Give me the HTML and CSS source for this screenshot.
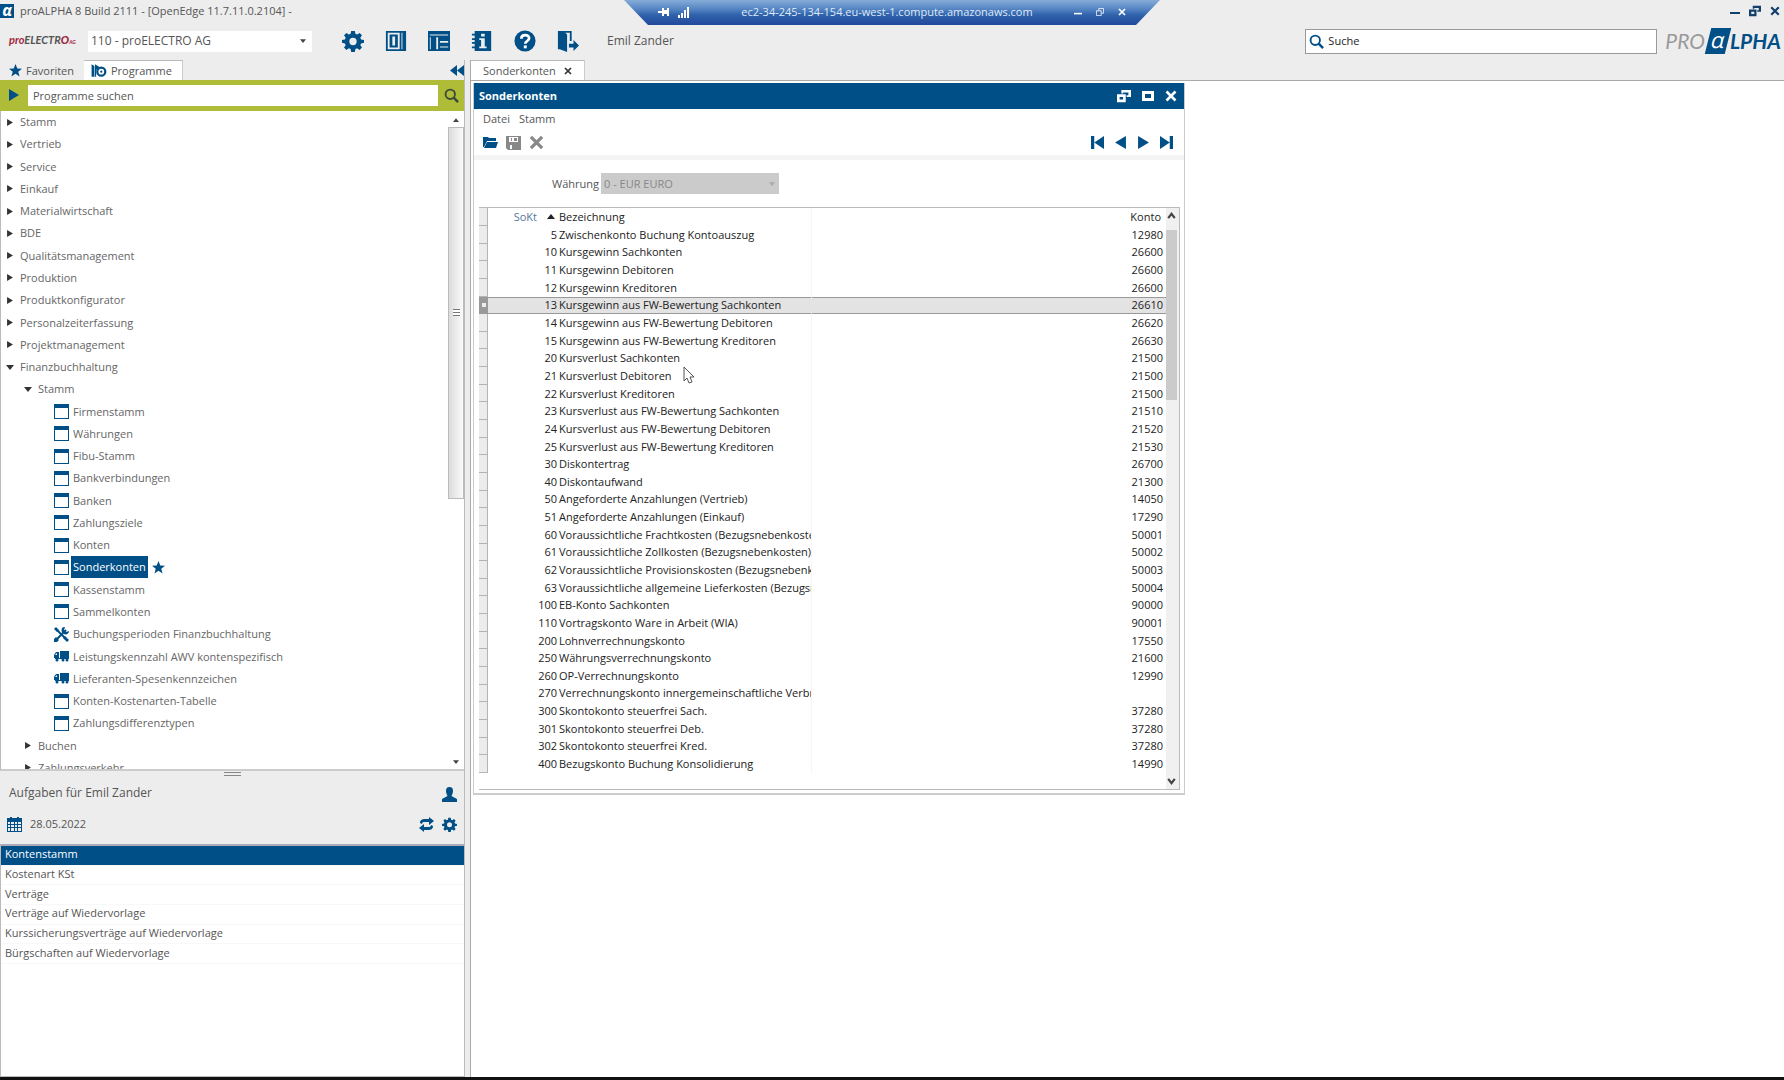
FILE: index.html
```html
<!DOCTYPE html>
<html lang="de">
<head>
<meta charset="utf-8">
<title>proALPHA – Sonderkonten</title>
<link rel="stylesheet" href="styles.css">
</head>
<body>
<svg class="sprite" aria-hidden="true">
  <symbol id="gear" viewBox="0 0 24 24"><path fill-rule="evenodd" d="M10 1h4l.6 3.2 1.9.8L19.200 3.200l2.600 2.600-1.800 2.700.8 1.900L24 11v3l-3.200.6-.8 1.900 1.800 2.700-2.600 2.600-2.700-1.800-1.900.8L14 24h-4l-.6-3.200-1.900-.8-2.700 1.800-2.600-2.600L4 16.500l-.8-1.900L0 14v-3l3.200-.6.8-1.900-1.800-2.700 2.600-2.600L7.500 5l1.900-.8zM12 8.500a4 4 0 1 0 0 8 4 4 0 0 0 0-8z"/></symbol>
  <symbol id="panel" viewBox="0 0 24 24"><path fill-rule="evenodd" d="M1 1h22v22H1zM3 3v18h13V3zM18 3v18h1V3z"/><path fill-rule="evenodd" d="M5 5h9v14H5zM8 7v10h3V7z"/></symbol>
  <symbol id="layout" viewBox="0 0 24 24"><path fill-rule="evenodd" d="M0 1h24v22H0zM2 5v1h20V5zM2 8v13h1V8zM9 8v13h2V8zM13 12v2h9v-2zM13 18v1h9v-1z"/></symbol>
  <symbol id="info" viewBox="0 0 24 24"><path fill-rule="evenodd" d="M4 1h18v22H4v-3H1v-2h3v-3H1v-2h3v-2H1V9h3V6H1V4h3zM11 4v3h4V4zM9 9v2h2v7H9v2h8v-2h-2V9z"/></symbol>
  <symbol id="help" viewBox="0 0 24 24"><circle cx="12" cy="12" r="11.500"/><path d="M8 9.500C8 4.500 16.500 4.500 16.500 9c0 3-4.200 3-4.200 6" fill="none" stroke="#fff" stroke-width="3"/><path d="M10.700 16.800h3.200V20h-3.200z" fill="#fff"/></symbol>
  <symbol id="exit" viewBox="0 0 24 24"><path d="M1 1h15v11h-2V3H9l2 2v19l-8-3H1zM13 15h5v-4l6 6-6 6v-4h-5z"/></symbol>
  <symbol id="star" viewBox="0 0 24 24"><path d="M12 0l3.300 8.500 8.700.3-6.900 5.500L19.500 23 12 18l-7.500 5 2.400-8.700L0 8.800l8.700-.3z"/></symbol>
  <symbol id="prog" viewBox="0 0 28 24"><path d="M1 1l5 3v19H1zM7 1l8 5-6 5v12H7z"/><circle cx="18" cy="14" r="7" fill="none" stroke="currentColor" stroke-width="4"/><circle cx="18" cy="14" r="2"/></symbol>
  <symbol id="lens" viewBox="0 0 24 24"><g fill="none" stroke="currentColor"><circle cx="10" cy="10" r="7.500" stroke-width="3"/><path d="M15.500 15.500l7 7" stroke-width="4"/></g></symbol>
  <symbol id="win" viewBox="0 0 15 15"><path fill-rule="evenodd" d="M0 0h15v15H0zM1 4v10h13V4z"/></symbol>
  <symbol id="tools" viewBox="0 0 15 15"><path d="M3 3l9 9M12 3L3 12" stroke="currentColor" stroke-width="2"/><path d="M0 2l2-2 3 3-2 2zM10 0l1 0-1 3 2 2 3-1c0 3-3 4-5 3L8 5c-1-2 0-5 2-5zM9 11l2-2 4 4-2 2zM0 12l2-2 3 3-2 2H0z"/></symbol>
  <symbol id="truck" viewBox="0 0 15 13"><path fill-rule="evenodd" d="M6 1h9v7H6zM0 5l2-3h3v6H0zM1 5h2V3z"/><path d="M1 8h14v1H1z"/><circle cx="3" cy="10" r="1.500"/><circle cx="9" cy="10" r="1.500"/><circle cx="13" cy="10" r="1.500"/></symbol>
  <symbol id="restore" viewBox="0 0 16 14"><path fill-rule="evenodd" d="M5 0h11v8h-5V6h2V3H7v1H5zM0 5h10v9H0zM3 8v3h4V8z"/></symbol>
  <symbol id="cross" viewBox="0 0 12 12"><path d="M1.500 1.500l9 9M10.500 1.500l-9 9" stroke="currentColor" stroke-width="2.600"/></symbol>
  <symbol id="dash" viewBox="0 0 10 10"><path d="M0 6h10v2H0z"/></symbol>
  <symbol id="right" viewBox="0 0 10 12"><path d="M0 0l10 6-10 6z"/></symbol>
  <symbol id="left" viewBox="0 0 10 12"><path d="M10 0L0 6l10 6z"/></symbol>
  <symbol id="first" viewBox="0 0 12 12"><path d="M0 0h3v12H0zM12 0v12L3 6z"/></symbol>
  <symbol id="last" viewBox="0 0 12 12"><path d="M9 0h3v12H9zM0 0l9 6-9 6z"/></symbol>
  <symbol id="down" viewBox="0 0 8 5"><path d="M0 0h8L4 5z"/></symbol>
  <symbol id="up" viewBox="0 0 8 5"><path d="M0 5h8L4 0z"/></symbol>
</svg>

<header>
  <div class="titlebar">
    <span class="appmark">α</span>
    <span class="apptitle">proALPHA 8 Build 2111 - [OpenEdge 11.7.11.0.2104] -</span>
    <div class="winctl">
      <button aria-label="Minimieren"><svg class="i10"><use href="#dash"/></svg></button>
      <button aria-label="Wiederherstellen"><svg class="i12"><use href="#restore"/></svg></button>
      <button aria-label="Schließen"><svg class="i10"><use href="#cross"/></svg></button>
    </div>
  </div>
  <div class="toolbar">
    <span class="company">pro<i>ELECTR<b>O</b></i><small>AG</small></span>
    <label class="pick"><select aria-label="Firma"><option>110 - proELECTRO AG</option></select><svg class="caret"><use href="#down"/></svg></label>
    <nav class="tools">
      <button aria-label="Einstellungen"><svg class="i22"><use href="#gear"/></svg></button>
      <button aria-label="Seitenleiste"><svg class="i22"><use href="#panel"/></svg></button>
      <button aria-label="Layout"><svg class="i22"><use href="#layout"/></svg></button>
      <button aria-label="Information"><svg class="i22"><use href="#info"/></svg></button>
      <button aria-label="Hilfe"><svg class="i22"><use href="#help"/></svg></button>
      <button aria-label="Abmelden"><svg class="i22"><use href="#exit"/></svg></button>
    </nav>
    <span class="user">Emil Zander</span>
    <label class="search"><svg class="i15"><use href="#lens"/></svg><input type="text" placeholder="Suche" aria-label="Suche"></label>
    <span class="brand"><span class="pro">PRO</span><span class="alpha">α</span><span class="lpha">LPHA</span></span>
  </div>
</header>

<div class="rdp">
  <svg class="rdpbg" viewBox="0 0 536 25" preserveAspectRatio="none">
    <defs><linearGradient id="rg" x1="0" y1="0" x2="0" y2="1"><stop offset="0" stop-color="#86acd8"/><stop offset=".4" stop-color="#4f80c0"/><stop offset=".6" stop-color="#2f62ab"/><stop offset="1" stop-color="#21489c"/></linearGradient></defs>
    <path d="M0 0h536l-24 25H24z" fill="url(#rg)"/>
  </svg>
  <div class="rdprow">
    <svg class="i12" viewBox="0 0 12 12"><path d="M0 5h4V2h2v2h3V2h2v8H9V8H6v2H4V7H0z"/></svg>
    <svg class="i12" viewBox="0 0 12 12"><path d="M0 9h2v3H0zM3 7h2v5H3zM6 4h2v8H6zM9 1h2v11H9z"/></svg>
    <span class="host">ec2-34-245-134-154.eu-west-1.compute.amazonaws.com</span>
    <button aria-label="Minimieren"><svg class="i8"><use href="#dash"/></svg></button>
    <button aria-label="Wiederherstellen"><svg class="i8" viewBox="0 0 10 10"><path fill="none" stroke="currentColor" d="M3.500 3V.5h6v6H7M.5 3.500h6v6h-6z"/></svg></button>
    <button aria-label="Schließen"><svg class="i8"><use href="#cross"/></svg></button>
  </div>
</div>

<div class="body">
<aside>
  <div class="tabs">
    <button class="tab"><svg class="i13"><use href="#star"/></svg>Favoriten</button>
    <button class="tab on"><svg class="i15"><use href="#prog"/></svg>Programme</button>
    <button class="collapse" aria-label="Einklappen"><svg viewBox="0 0 14 11"><path d="M7 0v11L0 5.500zM14 0v11L7 5.500z"/></svg></button>
  </div>
  <div class="finder">
    <button aria-label="Starten"><svg class="i12"><use href="#right"/></svg></button>
    <input type="text" placeholder="Programme suchen" aria-label="Programme suchen">
    <button class="go" aria-label="Suchen"><svg class="i15"><use href="#lens"/></svg></button>
  </div>
  <div class="treebox">
    <ul class="tree">
      <li><svg class="ar"><use href="#right"/></svg><a href="#">Stamm</a></li>
      <li><svg class="ar"><use href="#right"/></svg><a href="#">Vertrieb</a></li>
      <li><svg class="ar"><use href="#right"/></svg><a href="#">Service</a></li>
      <li><svg class="ar"><use href="#right"/></svg><a href="#">Einkauf</a></li>
      <li><svg class="ar"><use href="#right"/></svg><a href="#">Materialwirtschaft</a></li>
      <li><svg class="ar"><use href="#right"/></svg><a href="#">BDE</a></li>
      <li><svg class="ar"><use href="#right"/></svg><a href="#">Qualitätsmanagement</a></li>
      <li><svg class="ar"><use href="#right"/></svg><a href="#">Produktion</a></li>
      <li><svg class="ar"><use href="#right"/></svg><a href="#">Produktkonfigurator</a></li>
      <li><svg class="ar"><use href="#right"/></svg><a href="#">Personalzeiterfassung</a></li>
      <li><svg class="ar"><use href="#right"/></svg><a href="#">Projektmanagement</a></li>
      <li><svg class="ar open"><use href="#down"/></svg><a href="#">Finanzbuchhaltung</a></li>
      <li class="l1"><svg class="ar open"><use href="#down"/></svg><a href="#">Stamm</a></li>
      <li class="l2"><svg class="i15"><use href="#win"/></svg><a href="#">Firmenstamm</a></li>
      <li class="l2"><svg class="i15"><use href="#win"/></svg><a href="#">Währungen</a></li>
      <li class="l2"><svg class="i15"><use href="#win"/></svg><a href="#">Fibu-Stamm</a></li>
      <li class="l2"><svg class="i15"><use href="#win"/></svg><a href="#">Bankverbindungen</a></li>
      <li class="l2"><svg class="i15"><use href="#win"/></svg><a href="#">Banken</a></li>
      <li class="l2"><svg class="i15"><use href="#win"/></svg><a href="#">Zahlungsziele</a></li>
      <li class="l2"><svg class="i15"><use href="#win"/></svg><a href="#">Konten</a></li>
      <li class="l2 sel"><svg class="i15"><use href="#win"/></svg><a href="#">Sonderkonten</a><svg class="i13"><use href="#star"/></svg></li>
      <li class="l2"><svg class="i15"><use href="#win"/></svg><a href="#">Kassenstamm</a></li>
      <li class="l2"><svg class="i15"><use href="#win"/></svg><a href="#">Sammelkonten</a></li>
      <li class="l2"><svg class="i15"><use href="#tools"/></svg><a href="#">Buchungsperioden Finanzbuchhaltung</a></li>
      <li class="l2"><svg class="i15"><use href="#truck"/></svg><a href="#">Leistungskennzahl AWV kontenspezifisch</a></li>
      <li class="l2"><svg class="i15"><use href="#truck"/></svg><a href="#">Lieferanten-Spesenkennzeichen</a></li>
      <li class="l2"><svg class="i15"><use href="#win"/></svg><a href="#">Konten-Kostenarten-Tabelle</a></li>
      <li class="l2"><svg class="i15"><use href="#win"/></svg><a href="#">Zahlungsdifferenztypen</a></li>
      <li class="l1"><svg class="ar"><use href="#right"/></svg><a href="#">Buchen</a></li>
      <li class="l1"><svg class="ar"><use href="#right"/></svg><a href="#">Zahlungsverkehr</a></li>
    </ul>
    <div class="sbar"><svg class="sa"><use href="#up"/></svg><div class="thumb"><i></i></div><div class="rest"></div><svg class="sa"><use href="#down"/></svg></div>
  </div>
  <section class="tasks">
    <div class="grip"></div>
    <div class="taskhead"><h2>Aufgaben für Emil Zander</h2><button aria-label="Benutzer"><svg class="i15" viewBox="0 0 15 15"><path d="M7.500 0C10 0 11 1.500 11 4S9.800 8 9.500 9l5.500 3v3H0v-3l5.500-3C5.200 8 4 6.500 4 4s1-4 3.500-4z"/></svg></button></div>
    <div class="taskdate">
      <svg class="i15" viewBox="0 0 15 15"><path fill-rule="evenodd" d="M0 1h3V0h2v1h5V0h2v1h3v14H0zM1 5v2h2V5zM4 5v2h3V5zM8 5v2h2V5zM11 5v2h3V5zM1 8v2h2V8zM4 8v2h3V8zM8 8v2h2V8zM11 8v2h3V8zM1 11v3h2v-3zM4 11v3h3v-3zM8 11v3h2v-3zM11 11v3h3v-3z"/></svg>
      <span>28.05.2022</span>
      <button aria-label="Aktualisieren"><svg class="i15" viewBox="0 0 15 15"><path d="M1 6c0-3 2-4 5-4h4V0l5 4-5 4V5H6C4 5 3.500 5 3 7zM14 9c0 3-2 4-5 4H5v2l-5-4 5-4v3h4c2 0 2.500 0 3-2z"/></svg></button>
      <button aria-label="Einstellungen"><svg class="i15"><use href="#gear"/></svg></button>
    </div>
    <ul class="tasklist">
      <li class="on">Kontenstamm</li><li>Kostenart KSt</li><li>Verträge</li><li>Verträge auf Wiedervorlage</li><li>Kurssicherungsverträge auf Wiedervorlage</li><li>Bürgschaften auf Wiedervorlage</li>
    </ul>
  </section>
</aside>

<main>
  <div class="tabs mtabs"><button class="tab on">Sonderkonten<svg class="i8"><use href="#cross"/></svg></button></div>
  <div class="desk">
    <section class="window">
      <div class="wtitle"><h1>Sonderkonten</h1>
        <button aria-label="Wiederherstellen"><svg class="i14"><use href="#restore"/></svg></button>
        <button aria-label="Maximieren"><svg class="i12" viewBox="0 0 12 12"><path fill-rule="evenodd" d="M0 1h12v10H0zM3 4v4h6V4z"/></svg></button>
        <button aria-label="Schließen"><svg class="i12"><use href="#cross"/></svg></button>
      </div>
      <div class="menu"><button>Datei</button><button>Stamm</button></div>
      <div class="wtools">
        <button aria-label="Öffnen"><svg class="i15 blue" viewBox="0 0 15 15"><path d="M0 2h5l1 1h7v3H4l-3 6H0zM4 7h11l-2 6H1z"/></svg></button>
        <button aria-label="Speichern"><svg class="i15 grey" viewBox="0 0 15 15"><path fill-rule="evenodd" d="M0 1h15v14H2l-2-2zM3 2v5h9V2zM4 10v4h2v-4zM5 3h1v3H5zM8 3h3v3H8z"/></svg></button>
        <button aria-label="Löschen"><svg class="i15 grey"><use href="#cross"/></svg></button>
        <span class="nav">
          <button aria-label="Erster"><svg class="i13 blue"><use href="#first"/></svg></button>
          <button aria-label="Voriger"><svg class="i13 blue"><use href="#left"/></svg></button>
          <button aria-label="Nächster"><svg class="i13 blue"><use href="#right"/></svg></button>
          <button aria-label="Letzter"><svg class="i13 blue"><use href="#last"/></svg></button>
        </span>
      </div>
      <div class="form"><label for="cur">Währung</label><span class="cur"><select id="cur" disabled><option>0 - EUR EURO</option></select><svg class="caret"><use href="#down"/></svg></span></div>
      <div class="grid">
        <table>
          <colgroup><col class="c0"><col class="c1"><col class="c2"><col></colgroup>
          <thead><tr><th></th><th class="so"><span>SoKt</span><svg><use href="#up"/></svg></th><th>Bezeichnung</th><th class="n">Konto</th></tr></thead>
          <tbody>
          <tr><td></td><td>5</td><td>Zwischenkonto Buchung Kontoauszug</td><td>12980</td></tr>
          <tr><td></td><td>10</td><td>Kursgewinn Sachkonten</td><td>26600</td></tr>
          <tr><td></td><td>11</td><td>Kursgewinn Debitoren</td><td>26600</td></tr>
          <tr><td></td><td>12</td><td>Kursgewinn Kreditoren</td><td>26600</td></tr>
          <tr class="cur-row"><td><i></i></td><td>13</td><td>Kursgewinn aus FW-Bewertung Sachkonten</td><td>26610</td></tr>
          <tr><td></td><td>14</td><td>Kursgewinn aus FW-Bewertung Debitoren</td><td>26620</td></tr>
          <tr><td></td><td>15</td><td>Kursgewinn aus FW-Bewertung Kreditoren</td><td>26630</td></tr>
          <tr><td></td><td>20</td><td>Kursverlust Sachkonten</td><td>21500</td></tr>
          <tr><td></td><td>21</td><td>Kursverlust Debitoren</td><td>21500</td></tr>
          <tr><td></td><td>22</td><td>Kursverlust Kreditoren</td><td>21500</td></tr>
          <tr><td></td><td>23</td><td>Kursverlust aus FW-Bewertung Sachkonten</td><td>21510</td></tr>
          <tr><td></td><td>24</td><td>Kursverlust aus FW-Bewertung Debitoren</td><td>21520</td></tr>
          <tr><td></td><td>25</td><td>Kursverlust aus FW-Bewertung Kreditoren</td><td>21530</td></tr>
          <tr><td></td><td>30</td><td>Diskontertrag</td><td>26700</td></tr>
          <tr><td></td><td>40</td><td>Diskontaufwand</td><td>21300</td></tr>
          <tr><td></td><td>50</td><td>Angeforderte Anzahlungen (Vertrieb)</td><td>14050</td></tr>
          <tr><td></td><td>51</td><td>Angeforderte Anzahlungen (Einkauf)</td><td>17290</td></tr>
          <tr><td></td><td>60</td><td>Voraussichtliche Frachtkosten (Bezugsnebenkosten)</td><td>50001</td></tr>
          <tr><td></td><td>61</td><td>Voraussichtliche Zollkosten (Bezugsnebenkosten)</td><td>50002</td></tr>
          <tr><td></td><td>62</td><td>Voraussichtliche Provisionskosten (Bezugsnebenkosten)</td><td>50003</td></tr>
          <tr><td></td><td>63</td><td>Voraussichtliche allgemeine Lieferkosten (Bezugsnebenkosten)</td><td>50004</td></tr>
          <tr><td></td><td>100</td><td>EB-Konto Sachkonten</td><td>90000</td></tr>
          <tr><td></td><td>110</td><td>Vortragskonto Ware in Arbeit (WIA)</td><td>90001</td></tr>
          <tr><td></td><td>200</td><td>Lohnverrechnungskonto</td><td>17550</td></tr>
          <tr><td></td><td>250</td><td>Währungsverrechnungskonto</td><td>21600</td></tr>
          <tr><td></td><td>260</td><td>OP-Verrechnungskonto</td><td>12990</td></tr>
          <tr><td></td><td>270</td><td>Verrechnungskonto innergemeinschaftliche Verbringung</td><td></td></tr>
          <tr><td></td><td>300</td><td>Skontokonto steuerfrei Sach.</td><td>37280</td></tr>
          <tr><td></td><td>301</td><td>Skontokonto steuerfrei Deb.</td><td>37280</td></tr>
          <tr><td></td><td>302</td><td>Skontokonto steuerfrei Kred.</td><td>37280</td></tr>
          <tr><td></td><td>400</td><td>Bezugskonto Buchung Konsolidierung</td><td>14990</td></tr>
          </tbody>
        </table>
        <div class="gbar">
          <svg viewBox="0 0 10 10"><path d="M2 7l3-4 3 4"/></svg><div class="gthumb"></div><svg viewBox="0 0 10 10"><path d="M2 3l3 4 3-4"/></svg>
        </div>
      </div>
    </section>
    <svg class="pointer" viewBox="0 0 12 18"><path d="M1 1v14l3-3 2 5 3-1-2-5h4z" fill="#fff" stroke="#555"/></svg>
  </div>
</main>
</div>
</body>
</html>
```
FILE: styles.css
```css
* { box-sizing: border-box; }
html, body { margin: 0; }
body {
  --blue: #004f87;
  --grey: #ededed;
  height: 100vh;
  display: flex;
  flex-direction: column;
  background: var(--grey);
  border-bottom: 3px solid #111;
  color: #555;
  font: 11px/14px "Open Sans", "Noto Sans", sans-serif;
  position: relative;
  overflow: hidden;
}
.sprite { position: absolute; width: 0; height: 0; }
svg { fill: currentColor; flex: none; display: block; }
button { border: 0; padding: 0; margin: 0; background: none; font: inherit; color: inherit; display: flex; align-items: center; }
input, select { font: inherit; color: inherit; border: 0; margin: 0; border-radius: 0; }
ul { list-style: none; margin: 0; padding: 0; }
h1, h2 { margin: 0; font: inherit; }
a { color: inherit; text-decoration: none; }
.i8 { width: 8px; height: 8px; }
.i10 { width: 10px; height: 10px; }
.i12 { width: 12px; height: 12px; }
.i13 { width: 13px; height: 13px; }
.i14 { width: 14px; height: 14px; }
.i15 { width: 15px; height: 15px; }
.i22 { width: 22px; height: 22px; }
.blue { color: var(--blue); }
.grey { color: #888; }
.caret { width: 6px; height: 4px; color: #444; }

.titlebar { display: flex; align-items: center; height: 22px; padding-right: 4px; }
.appmark { width: 14px; height: 14px; background: var(--blue); color: #fff; font: italic bold 16px/12px "Open Sans", sans-serif; text-align: center; }
.apptitle { padding-left: 6px; flex: 1; }
.winctl { display: flex; gap: 9px; color: #123f6b; }

.toolbar { display: flex; align-items: center; height: 38px; padding: 0 3px 0 9px; font-size: 12px; }
.company { width: 79px; color: #a2253c; font: italic bold 11px/14px Lato, sans-serif; white-space: nowrap; }
.company i { color: #555; }
.company b { color: #a2253c; }
.company small { font-size: 5px; }
.pick { display: flex; align-items: center; width: 224px; height: 21px; background: #fff; padding-right: 6px; }
.pick select { appearance: none; flex: 1; background: none; padding: 0 3px; }
.tools { display: flex; gap: 21px; margin-left: 30px; color: var(--blue); }
.user { margin-left: 28px; flex: 1; }
.search { display: flex; align-items: center; gap: 4px; width: 352px; height: 25px; padding-left: 3px; background: #fff; border: 1px solid #999; color: var(--blue); font-size: 11px; }
.search input { flex: 1; color: #222; outline: 0; padding: 0; }
.search input::placeholder { color: #222; }
.brand { display: flex; align-items: center; margin-left: 8px; font: italic 21px/22px Lato, sans-serif; color: #999; }
.alpha { width: 20px; height: 26px; margin: 0 2px 0 3px; background: var(--blue); color: #fff; transform: skewX(-14deg); text-align: center; font: 22px/22px "Open Sans", sans-serif; }
.lpha { color: var(--blue); font-weight: bold; }

.rdp { position: absolute; top: 0; left: 50%; width: 536px; height: 25px; transform: translateX(-50%); color: #fff; }
.rdpbg { position: absolute; inset: 0; width: 100%; height: 100%; }
.rdprow { position: relative; display: flex; align-items: center; height: 23px; padding: 0 34px; gap: 8px; }
.rdprow .host { flex: 1; padding-left: 16px; text-align: center; color: #dfe9f7; }
.rdprow button { margin-left: 6px; }

.body { flex: 1; display: flex; min-height: 0; }
aside { width: 471px; display: flex; flex-direction: column; border-right: 1px solid #aaa; padding-right: 6px; background: linear-gradient(90deg, transparent 464px, #bbb 464px, #bbb 465px, #ececec 465px); }
.tabs { display: flex; height: 20px; flex: none; }
.tab { gap: 4px; padding: 0 9px; border-top: 1px solid transparent; }
.tab.on { background: #fff; border-top-color: #bbb; border-right: 1px solid #ccc; padding: 0 10px 0 7px; }
.tab:not(.on) { width: 84px; }
.tab svg { color: var(--blue); }
.tab .i15 { width: 16px; }
.collapse { margin-left: auto; color: var(--blue); }
.collapse svg { width: 14px; height: 11px; }
.finder { display: flex; align-items: center; height: 31px; flex: none; background: #aebc37; color: var(--blue); padding: 0 5px 1px 8px; gap: 8px; }
.finder input { flex: 1; height: 21px; color: #555; padding: 0 5px; background: #fff; outline: 0; }
.finder input::placeholder { color: #555; }
.finder .go { color: #3c4a3a; margin-left: -2px; }

.treebox { flex: 1; min-height: 0; display: flex; background: #fff; overflow: hidden; border-left: 1px solid #bbb; border-bottom: 2px solid #ccc; }
.tree { flex: 1; display: grid; grid-auto-rows: 1fr; height: 668px; color: #666; }
.tree li { display: flex; align-items: center; padding-left: 6px; }
.ar { width: 6px; height: 7px; margin-right: 7px; color: #333; }
.tree .l1 { padding-left: 24px; }
.tree .ar.open { width: 8px; height: 5px; margin: 0 6px 0 -1px; }
.tree .l2 { padding-left: 53px; color: var(--blue); }
.tree .l2 a { color: #666; padding: 4px 2px 4px 2px; margin-left: 2px; }
.tree .sel a { background: var(--blue); color: #fff; }
.tree .sel .i13 { margin-left: 4px; }
.sbar { width: 16px; display: flex; flex-direction: column; align-items: center; color: #444; }
.sa { width: 6px; height: 4px; margin: 7px 0 5px; }
.thumb { flex: 372; width: 16px; border: 1px solid #bbb; background: linear-gradient(90deg, #dcdcdc, #fafafa); display: flex; align-items: center; justify-content: center; }
.thumb i { width: 7px; height: 7px; background: repeating-linear-gradient(#777 0 1px, #fff 1px 3px); }
.rest { flex: 256; }

.tasks { height: 306px; flex: none; display: flex; flex-direction: column; }
.grip { width: 17px; height: 4px; margin: 1px auto 0; border-top: 1px solid #888; border-bottom: 1px solid #888; flex: none; }
.taskhead { display: flex; align-items: center; height: 36px; flex: none; padding: 0 7px 0 9px; font-size: 12px; }
.taskhead h2 { flex: 1; padding-bottom: 3px; }
.tasks button, .taskdate > svg { color: var(--blue); }
.taskdate { display: flex; align-items: center; gap: 8px; height: 24px; flex: none; padding: 0 7px; }
.taskdate span { flex: 1; }
.tasklist { flex: 1; margin-top: 8px; background: #fff; border: 1px solid #bbb; border-top: 2px solid #aab; border-right: 0; display: grid; grid-template-rows: repeat(6, minmax(0, 1fr)); padding-bottom: 112px; }
.tasklist li { display: flex; align-items: center; padding: 0 4px 2px; border-bottom: 1px solid #f8f8f8; }
.tasklist .on { background: var(--blue); color: #fff; }

main { flex: 1; display: flex; flex-direction: column; min-width: 0; }
.mtabs .tab.on { padding: 0 12px 0 12px; gap: 8px; }
.tab .i8 { color: #333; }
.desk { flex: 1; background: #fff; border-top: 1px solid #aaa; padding: 2px 0 0 2px; position: relative; }
.window { width: 712px; max-width: 100%; border: 1px solid #ccc; border-top: 0; border-bottom: 2px solid #ccc; background: #fff; }
.wtitle { display: flex; align-items: center; gap: 11px; height: 26px; padding: 0 7px 0 5px; background: var(--blue); color: #fff; }
.wtitle h1 { flex: 1; font-weight: bold; font-size: 11px; }
.menu { display: flex; gap: 9px; padding: 3px 9px; height: 20px; }
.wtools { display: flex; align-items: center; gap: 8px; height: 26px; padding: 0 11px 0 9px; }
.nav { margin-left: auto; display: flex; gap: 10px; }
.form { display: flex; align-items: center; height: 52px; padding-left: 78px; border-top: 5px solid #f4f4f4; gap: 2px; }
.cur { display: flex; align-items: center; width: 178px; height: 21px; background: #cbcbcb; padding-right: 4px; }
.cur select { appearance: none; flex: 1; background: none; color: #888; opacity: 1; padding: 0 3px; }
.cur .caret { color: #aaa; }
.grid { display: flex; margin: 0 4px 3px 5px; border: 1px solid #bbb; border-left: 0; color: #222; height: 583px; align-items: flex-start; }
table { flex: 1; width: 0; height: 565px; table-layout: fixed; border-collapse: separate; border-spacing: 0; }
.c0 { width: 9px; }
.c1 { width: 69px; }
.c2 { width: 255px; }
th, td { padding: 0; font-weight: normal; white-space: nowrap; overflow: hidden; text-align: left; }
th { height: 18px; }
th:first-child, td:first-child { background: #ececec; box-shadow: inset -1px -1px #b4b4b4; }
td:nth-child(2) { text-align: right; }
td:nth-child(3), th:nth-child(3) { padding-left: 2px; border-right: 1px solid #f6f6f6; }
td:nth-child(4), .n { text-align: right; padding-right: 3px; }
th.n { padding-right: 5px; }
.so svg { display: inline-block; width: 8px; height: 5px; margin: 0 2px 2px 10px; }
.so span { color: #56779a; }
th.so { text-align: right; }
.cur-row td { background: #e3e3e3; box-shadow: inset 0 1px #999, inset 0 -1px #999; border-right-color: #e3e3e3; }
.cur-row td:first-child { background: #999; }
.cur-row td i { display: block; width: 4px; height: 4px; margin: 0 auto; background: #eee; }
.gbar { align-self: stretch; width: 13px; padding-right: 2px; display: flex; flex-direction: column; background: #f0f0f0; }
.gbar svg { width: 11px; height: 16px; fill: none; stroke: #444; stroke-width: 2; }
.gbar svg:last-child { margin-top: auto; }
.gthumb { height: 170px; margin-top: 6px; background: #cbcbcb; }
.pointer { position: absolute; left: 212px; top: 285px; width: 12px; height: 18px; }
```
